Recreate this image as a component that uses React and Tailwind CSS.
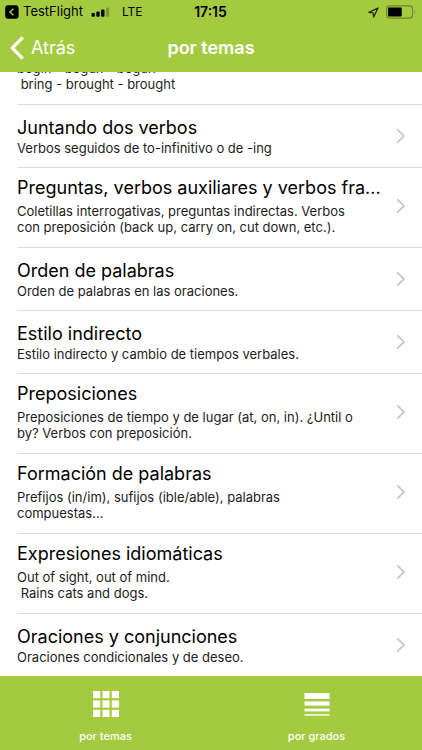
import React from 'react';

const topics = [
  { title: '', lines: ['begin - begun - begun', ' bring - brought - brought'] },
  { title: 'Juntando dos verbos', lines: ['Verbos seguidos de to-infinitivo o de -ing'] },
  {
    title: 'Preguntas, verbos auxiliares y verbos fra...',
    lines: ['Coletillas interrogativas, preguntas indirectas. Verbos', 'con preposición (back up, carry on, cut down, etc.).'],
  },
  { title: 'Orden de palabras', lines: ['Orden de palabras en las oraciones.'] },
  { title: 'Estilo indirecto', lines: ['Estilo indirecto y cambio de tiempos verbales.'] },
  {
    title: 'Preposiciones',
    lines: ['Preposiciones de tiempo y de lugar (at, on, in). ¿Until o', 'by? Verbos con preposición.'],
  },
  { title: 'Formación de palabras', lines: ['Prefijos (in/im), sufijos (ible/able), palabras', 'compuestas...'] },
  { title: 'Expresiones idiomáticas', lines: ['Out of sight, out of mind.', ' Rains cats and dogs.'] },
  { title: 'Oraciones y conjunciones', lines: ['Oraciones condicionales y de deseo.'] },
];

function StatusBar() {
  return (
    <div className="grid grid-cols-3 items-center h-6 pl-[5px] pr-[6px] text-black text-xs">
      <div className="flex items-center whitespace-nowrap">
        <svg viewBox="0 0 14 14" className="w-[14px] h-[14px] shrink-0">
          <rect x="0.2" y="0.2" width="13.4" height="13.6" rx="3" fill="#000" />
          <path d="M8.4 3.8 L5 7 L8.4 10.2" fill="none" stroke="#a4cb3f" strokeWidth="1.5" />
        </svg>
        <span className="ml-1 text-[13px]">TestFlight</span>
        <svg viewBox="0 0 19 10" className="w-[19px] h-[10px] ml-2 shrink-0">
          <rect x="0.5" y="6" width="3.4" height="3.8" rx="1" />
          <rect x="5.3" y="4.6" width="3.4" height="5.2" rx="1" />
          <rect x="10.1" y="2.6" width="3.4" height="7.2" rx="1" />
          <rect x="15" y="0.4" width="3.2" height="9.4" rx="1" opacity="0.25" />
        </svg>
        <span className="ml-3">LTE</span>
      </div>
      <span className="text-center text-sm leading-4 font-semibold">17:15</span>
      <div className="flex items-center justify-end gap-[7px]">
        <svg viewBox="0 0 11 11" className="w-[11px] h-[11px]">
          <path d="M0.9 5.4 L10 1 L5.7 10 L5.1 5.8 Z" fill="none" stroke="#1c2307" strokeWidth="1.2" strokeLinejoin="round" />
        </svg>
        <svg viewBox="0 0 30 14" className="w-[30px] h-[14px]">
          <rect x="0.6" y="0.9" width="26" height="12.2" rx="3" fill="none" stroke="#6c8629" strokeWidth="1.1" />
          <rect x="2.1" y="2.6" width="13.6" height="8.8" rx="0.8" />
          <path d="M28.1 5 Q29.6 7 28.1 9 Z" fill="#6c8629" />
        </svg>
      </div>
    </div>
  );
}

function TopicRow({ title, lines }) {
  const single = lines.length === 1;
  return (
    <li className="shrink-0 ml-[17px] border-b border-[#dcdcde] last:border-b-0">
      <button
        type="button"
        className={'flex items-center w-full pr-4 text-left ' + (single ? 'pt-[11px] pb-[11px]' : 'pt-2 pb-3')}
      >
        <span className="flex-1 min-w-0 pr-2">
          <span className="block h-6 truncate text-lg leading-6 text-black">{title}</span>
          <span className={'block whitespace-pre text-[13px] leading-4 text-[#1c1c1c] ' + (single ? '' : 'mt-[3px]')}>
            {lines.join('\n')}
          </span>
        </span>
        <svg viewBox="0 0 10 16" className="w-[10px] h-4 shrink-0">
          <path d="M1.2 1.3 L8 8 L1.2 14.7" fill="none" stroke="#c7c7cc" strokeWidth="1.8" />
        </svg>
      </button>
    </li>
  );
}

function App() {
  return (
    <div className="flex flex-col h-screen bg-white overflow-hidden font-['Inter',sans-serif]">
      {/* Header */}
      <header className="shrink-0 bg-[#a4cb3f]">
        <StatusBar />
        <div className="grid grid-cols-3 items-center h-12 px-[10px] text-white">
          <button type="button" className="flex items-center gap-[7px] text-lg">
            <svg viewBox="0 0 14 24" className="w-[14px] h-6">
              <path d="M12.8 1.4 L2.2 12 L12.8 22.6" fill="none" stroke="#fff" strokeWidth="3.2" />
            </svg>
            Atrás
          </button>
          <h1 className="text-center text-lg font-semibold whitespace-nowrap">por temas</h1>
        </div>
      </header>

      {/* Topic list, scrolled to its end */}
      <main className="flex-1 min-h-0 overflow-hidden flex flex-col justify-end">
        <ul className="flex flex-col">
          {topics.map((topic) => (
            <TopicRow key={topic.lines[0]} title={topic.title} lines={topic.lines} />
          ))}
        </ul>
      </main>

      {/* Tab bar */}
      <nav className="shrink-0 grid grid-cols-2 h-[74px] bg-[#a4cb3f] text-white text-[11px] font-medium">
        <button type="button" className="flex flex-col items-center justify-end gap-[11px] pb-[6px]">
          <svg viewBox="0 0 26 26" className="w-[26px] h-[26px]" fill="#fff">
            {[0, 9.4, 18.8].map((y) =>
              [0, 9.4, 18.8].map((x) => <rect key={x + '-' + y} x={x} y={y} width="7.2" height="7.2" />)
            )}
          </svg>
          <span className="leading-4">por temas</span>
        </button>
        <button type="button" className="flex flex-col items-center justify-end gap-[11px] pb-[6px]">
          <svg viewBox="0 0 26 26" className="w-[26px] h-[26px]" fill="#fff">
            <rect x="0.5" y="2" width="25" height="6" />
            <rect x="0.5" y="10.4" width="25" height="4.2" />
            <rect x="0.5" y="17.6" width="25" height="2.8" />
            <rect x="0.5" y="23.2" width="25" height="1.4" />
          </svg>
          <span className="leading-4">por grados</span>
        </button>
      </nav>
    </div>
  );
}

export default App;
